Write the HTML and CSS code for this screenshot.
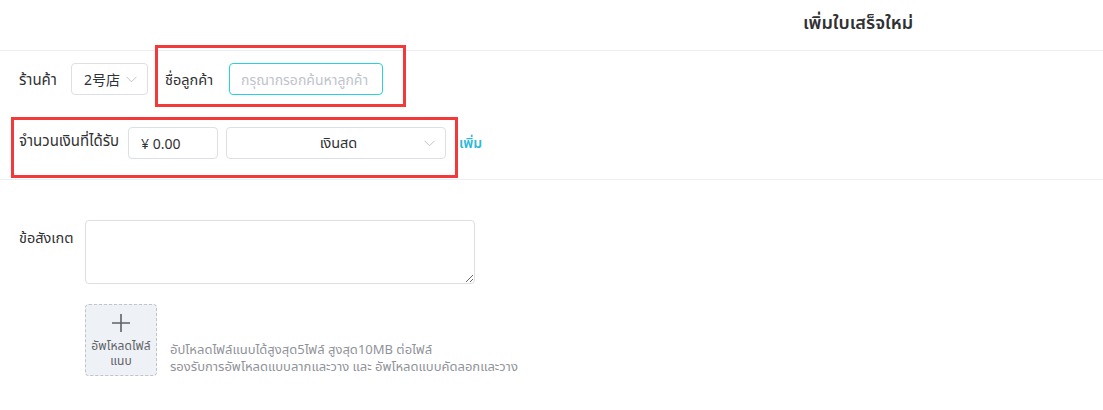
FILE: index.html
```html
<!DOCTYPE html>
<html lang="th">
<head>
<meta charset="utf-8">
<title>เพิ่มใบเสร็จใหม่</title>
<link rel="stylesheet" href="styles.css">
</head>
<body>
<div class="page">
  <header class="header">
    <h1 class="title">เพิ่มใบเสร็จใหม่</h1>
  </header>

  <section class="form-top">
    <div class="row row-first">
      <div class="item">
        <label class="label label-shop">ร้านค้า</label>
        <div class="select select-shop">
          <span class="select-text">2号店</span>
          <svg class="chev" width="11" height="7" viewBox="0 0 11 7"><path d="M0.5 0.8 L5.5 5.8 L10.5 0.8" fill="none" stroke="#c0c4cc" stroke-width="1"/></svg>
        </div>
      </div>
      <div class="item item-customer">
        <label class="label label-customer">ชื่อลูกค้า</label>
        <input class="input input-customer" type="text" placeholder="กรุณากรอกค้นหาลูกค้า">
      </div>
    </div>

    <div class="row row-second">
      <div class="item">
        <label class="label label-amount">จำนวนเงินที่ได้รับ</label>
        <div class="input input-amount">¥ 0.00</div>
        <div class="select select-pay">
          <span class="select-text center">เงินสด</span>
          <svg class="chev" width="11" height="7" viewBox="0 0 11 7"><path d="M0.5 0.8 L5.5 5.8 L10.5 0.8" fill="none" stroke="#c0c4cc" stroke-width="1"/></svg>
        </div>
        <a class="add-link">เพิ่ม</a>
      </div>
    </div>
  </section>

  <section class="form-bottom">
    <div class="row row-note">
      <label class="label label-note">ข้อสังเกต</label>
      <textarea class="textarea"></textarea>
    </div>
    <div class="row row-upload">
      <div class="upload">
        <svg class="plus" width="20" height="20" viewBox="0 0 20 20"><path d="M10 1 V19 M1 10 H19" stroke="#606266" stroke-width="1.6" fill="none"/></svg>
        <span class="upload-text">อัพโหลดไฟล์<br>แนบ</span>
      </div>
      <div class="hint">
        <div>อัปโหลดไฟล์แนบได้สูงสุด5ไฟล์ สูงสุด10MB ต่อไฟล์</div>
        <div>รองรับการอัพโหลดแบบลากและวาง และ อัพโหลดแบบคัดลอกและวาง</div>
      </div>
    </div>
  </section>

  <div class="mark mark-one"></div>
  <div class="mark mark-two"></div>
</div>
</body>
</html>
```

FILE: styles.css
```css
* { box-sizing: border-box; }

html, body {
  margin: 0;
  padding: 0;
  background: #ffffff;
}

body {
  font-family: "Noto Sans", "Noto Sans Thai", Tahoma, "Noto Sans CJK SC", sans-serif;
  font-size: 14px;
  color: #303133;
}

.page {
  position: relative;
  width: 1103px;
  height: 410px;
  overflow: hidden;
}

.header {
  height: 51px;
  border-bottom: 1px solid #ebeef5;
  display: flex;
  align-items: flex-start;
  padding-left: 803px;
}

.title {
  margin: 9px 0 0 0;
  font-size: 18px;
  font-weight: 600;
  line-height: 26px;
  color: #303133;
}

.form-top {
  padding: 12px 0 0 19px;
  height: 129px;
  border-bottom: 1px solid #ebeef5;
}

.row {
  display: flex;
  align-items: flex-start;
}

.row-second {
  margin-top: 32px;
}

.item {
  display: flex;
  align-items: flex-start;
}

.label {
  line-height: 32px;
  height: 32px;
  font-size: 14.5px;
  color: #303133;
  white-space: nowrap;
}

.label-shop { width: 52px; font-size: 15px; }

.label-customer { width: 64px; }

.item-customer { margin-left: 17px; }

.label-amount {
  width: 109px;
  font-size: 15px;
  line-height: 26px;
}

.label-note {
  width: 66px;
  line-height: 34px;
}

.select,
.input {
  height: 32px;
  border: 1px solid #dcdfe6;
  border-radius: 4px;
  background: #fff;
  display: flex;
  align-items: center;
  font-family: inherit;
  font-size: 14px;
  color: #303133;
}

.select {
  padding: 0 10px 0 12px;
}

.select-text {
  flex: 1;
}

.select-text.center {
  text-align: center;
  padding-left: 14px;
  font-size: 14.5px;
}

.chev { flex: none; }

.select-shop { width: 77px; }

.input-customer {
  width: 154px;
  border-color: #27d1df;
  padding: 0 11px;
  outline: none;
}

.input-customer::placeholder {
  color: #c0c4cc;
}

.input-amount {
  width: 90px;
  padding-left: 12px;
}

.select-pay {
  width: 220px;
  margin-left: 8px;
}

.add-link {
  margin-left: 13px;
  line-height: 32px;
  color: #2eb8d8;
  font-weight: 600;
  font-size: 14px;
  cursor: pointer;
}

.form-bottom {
  padding: 40px 0 0 19px;
}

.textarea {
  width: 390px;
  height: 64px;
  border: 1px solid #dcdfe6;
  border-radius: 4px;
  font-family: inherit;
  font-size: 14px;
  resize: vertical;
  margin: 0;
  display: block;
}

.row-upload {
  margin-top: 20px;
  padding-left: 66px;
  align-items: flex-end;
}

.upload {
  width: 72px;
  height: 72px;
  border: 1px dashed #c0c4cc;
  border-radius: 4px;
  background: #eef1f6;
  display: flex;
  flex-direction: column;
  align-items: center;
  padding-top: 8px;
}

.upload-text {
  margin-top: 5px;
  font-size: 12px;
  line-height: 15px;
  letter-spacing: 0.1px;
  color: #606266;
  text-align: center;
  white-space: nowrap;
}

.hint {
  margin-left: 13px;
  font-size: 13px;
  line-height: 17px;
  color: #909399;
  padding-bottom: 1px;
}

.mark {
  position: absolute;
  border: 3px solid #f23a3a;
  pointer-events: none;
}

.mark-one {
  left: 155px;
  top: 45px;
  width: 251px;
  height: 62px;
}

.mark-two {
  left: 11px;
  top: 117px;
  width: 447px;
  height: 61px;
}
```
